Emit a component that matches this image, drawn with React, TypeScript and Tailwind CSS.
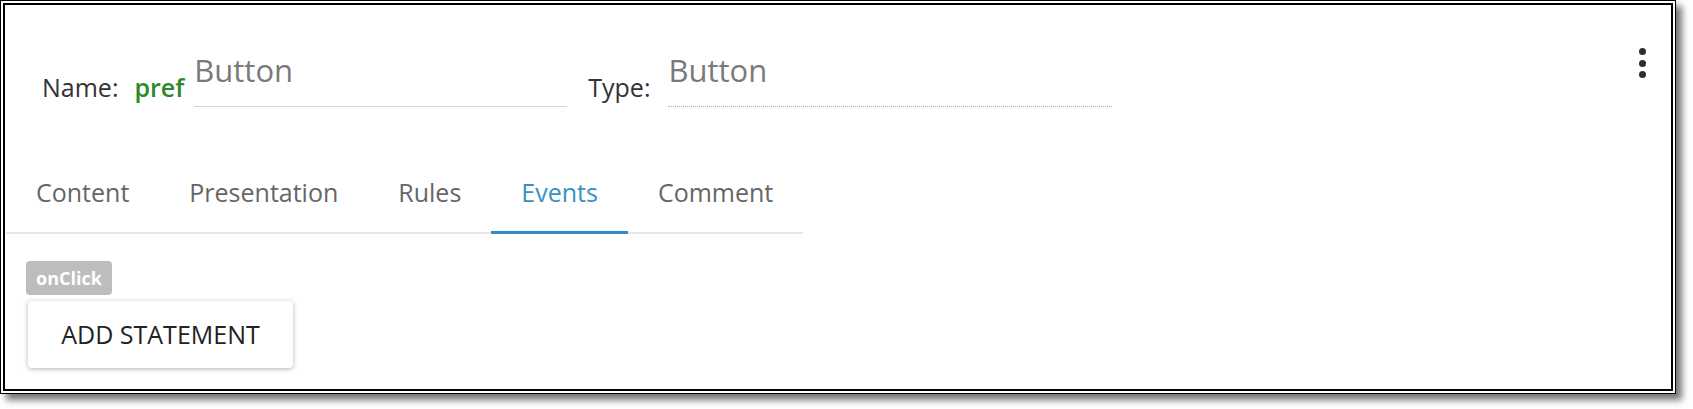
import React from 'react';

const tabs = ['Content', 'Presentation', 'Rules', 'Events', 'Comment'];

function Kebab() {
  return (
    <button type="button" className="flex flex-col gap-[4.5px]">
      <span className="block w-[7px] h-[7px] rounded-full bg-[#2e2e2e]" />
      <span className="block w-[7px] h-[7px] rounded-full bg-[#2e2e2e]" />
      <span className="block w-[7px] h-[7px] rounded-full bg-[#2e2e2e]" />
    </button>
  );
}

export default function App() {
  const active = 'Events';

  return (
    <div className="w-[1693px] h-[409px] bg-white font-['Open_Sans',sans-serif]">
      {/* Screenshot frame */}
      <div className="w-[1676px] h-[394px] border border-black p-[2px] bg-white shadow-[6px_6px_7px_rgba(0,0,0,0.55)]">
        <div className="h-full border-2 border-black flex flex-col">
          {/* Header: name + type */}
          <div className="flex items-start justify-between pt-[43px] pl-[37px] pr-[25px]">
            <div className="flex items-end mt-[7px]">
              <span className="text-[25px] leading-none text-[#333] pb-[7px]">Name:</span>
              <span className="ml-[16px] text-[25px] leading-none font-semibold text-[#2a8a2a] pb-[7px]">pref</span>
              <div className="ml-[10px] w-[373px] border-b border-[#d4d4d4] pb-[20px] text-[31px] leading-none text-[#7a7a7a]">
                Button
              </div>
              <span className="ml-[21px] text-[25px] leading-none text-[#333] pb-[7px]">Type:</span>
              <div className="ml-[18px] w-[444px] border-b border-dotted border-[#b0b0b0] pb-[20px] text-[31px] leading-none text-[#7a7a7a]">
                Button
              </div>
            </div>
            <Kebab />
          </div>

          {/* Tabs */}
          <div className="mt-[53px] ml-[1px] flex self-start border-b-2 border-[#e6e6e6]">
            {tabs.map((t) => (
              <button
                key={t}
                type="button"
                className={
                  t === active
                    ? 'px-[30px] pt-[20px] pb-[26px] -mb-[2px] border-b-[3px] border-[#2f8ec6] text-[25px] leading-none text-[#3592c4]'
                    : 'px-[30px] pt-[20px] pb-[26px] -mb-[2px] border-b-[3px] border-transparent text-[25px] leading-none text-[#666]'
                }
              >
                {t}
              </button>
            ))}
          </div>

          {/* Events */}
          <div className="flex flex-col items-start mt-[27px]">
            <span className="ml-[21px] h-[34px] px-[10px] flex items-center rounded-[4px] bg-[#bdbdbd] text-white text-[18px] font-bold leading-none">
              onClick
            </span>
            <button
              type="button"
              className="ml-[23px] mt-[6px] w-[265px] h-[67px] rounded-[4px] bg-white shadow-[0_1px_5px_rgba(0,0,0,0.3)] text-[25px] leading-none text-[#222]"
            >
              ADD STATEMENT
            </button>
          </div>
        </div>
      </div>
    </div>
  );
}
